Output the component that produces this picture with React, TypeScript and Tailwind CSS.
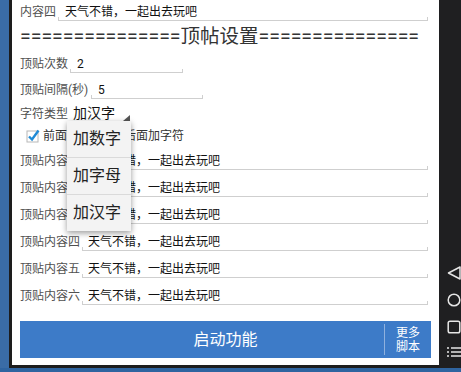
const font = "font-['Roboto','Noto_Sans_CJK_SC',sans-serif]";

function Field({ value, className = '' }: { value: string; className?: string }) {
  return (
    <div className={`relative h-[18px] flex items-center text-[12px] text-[#111] ${className}`}>
      {value}
      <div className="absolute inset-x-0 bottom-0 h-[4px] border-x border-b border-[#cfcfcf]" />
    </div>
  );
}

function Label({ text, w }: { text: string; w: string }) {
  return <div className={`${w} shrink-0 text-[12px] text-[#505050] whitespace-nowrap`}>{text}</div>;
}

function CheckBox() {
  return (
    <svg width="14" height="14" viewBox="0 0 14 14" className="shrink-0">
      <rect x="1" y="2" width="11" height="11" fill="#fff" stroke="#b8b8b8" strokeWidth="1" />
      <path d="M3 7.5 L6 10.5 L12.5 1.5" fill="none" stroke="#1f8ad6" strokeWidth="2.4" />
    </svg>
  );
}

export default function App() {
  const rows = ['顶贴内容一', '顶贴内容二', '顶贴内容三', '顶贴内容四', '顶贴内容五', '顶贴内容六'];
  const text = '天气不错，一起出去玩吧';

  return (
    <div className={`w-[461px] h-[372px] overflow-hidden flex flex-col bg-[#2f64a0] ${font}`}>
      <div className="flex h-[368px]">
        <div className="w-[9px] bg-[#3a6ca6]" />
        <div className="w-[3px] bg-[#1d1d1d]" />

        <div className="w-[427px] bg-white border-b-[3px] border-[#1d1d1d] px-[8px] flex flex-col">
          <div className="h-[24px] flex items-center pr-[3px]">
            <Label text="内容四" w="w-[38px]" />
            <Field value={text} className="flex-1 pl-[7px]" />
          </div>

          <div className="h-[26px] flex items-center text-[19.5px] text-[#333] whitespace-nowrap">
            ===============顶帖设置===============
          </div>

          <div className="h-[27px] flex items-center">
            <Label text="顶贴次数" w="w-[50px]" />
            <Field value="2" className="w-[113px] pl-[7px]" />
          </div>

          <div className="h-[25px] flex items-center">
            <Label text="顶贴间隔(秒)" w="w-[71px]" />
            <Field value="5" className="w-[112px] pl-[7px]" />
          </div>

          <div className="h-[23px] flex items-center">
            <Label text="字符类型" w="w-[53px]" />
            <div className="relative self-stretch w-[58px] flex items-center text-[14px] text-[#111]">
              加汉字
              <svg width="7" height="6" viewBox="0 0 7 6" className="absolute right-[1px] top-[13px]">
                <path d="M7 0 L7 6 L0 6 Z" fill="#555" />
              </svg>
              <div className="absolute z-10 top-[19px] left-[-6px] w-[64px] h-[110px] bg-[#f3f3f3] shadow-[0_2px_6px_rgba(0,0,0,0.4)] flex flex-col text-[16px] text-[#222]">
                {['加数字', '加字母', '加汉字'].map((t, i) => (
                  <div
                    key={t}
                    className={`flex-1 flex items-center pl-[6px] ${i > 0 ? 'border-t border-[#dadada]' : ''}`}
                  >
                    {t}
                  </div>
                ))}
              </div>
            </div>
          </div>

          <div className="h-[22px] flex items-center pl-[6px] text-[12px] text-[#333]">
            <CheckBox />
            <span className="ml-[3px]">前面加字符</span>
            <span className="ml-[4px]"><CheckBox /></span>
            <span className="ml-[3px]">后面加字符</span>
          </div>

          {rows.map((r) => (
            <div key={r} className="h-[27px] flex items-center pr-[3px]">
              <Label text={r} w="w-[62px]" />
              <Field value={text} className="flex-1 pl-[6px]" />
            </div>
          ))}

          <div className="mt-[12px] h-[37px] flex bg-[#3d7bc8] text-white">
            <div className="w-[47px]" />
            <div className="flex-1 flex items-center justify-center text-[16px]">启动功能</div>
            <div className="w-px my-[3px] bg-[#8fb1de]" />
            <div className="w-[46px] flex flex-col items-center justify-center text-[12px] leading-[14px]">
              <span>更多</span>
              <span>脚本</span>
            </div>
          </div>
        </div>

        <div className="w-[22px] bg-[#1f1f21] flex flex-col pl-[8px] pt-[266px] overflow-hidden">
          <svg width="15" height="14" viewBox="0 0 15 14" className="shrink-0">
            <path d="M13 1 L1.5 7 L13 13 Z" fill="none" stroke="#e6e6e6" strokeWidth="1.5" strokeLinejoin="round" />
          </svg>
          <svg width="14" height="14" viewBox="0 0 14 14" className="mt-[13px] shrink-0">
            <circle cx="7" cy="7" r="5.8" fill="none" stroke="#e6e6e6" strokeWidth="1.5" />
          </svg>
          <svg width="14" height="14" viewBox="0 0 14 14" className="mt-[13px] shrink-0">
            <rect x="1.2" y="1.2" width="11.6" height="11.6" rx="1.8" fill="none" stroke="#e6e6e6" strokeWidth="1.5" />
          </svg>
          <svg width="15" height="12" viewBox="0 0 15 12" className="mt-[12px] shrink-0">
            <path d="M0 2 H2 M4 2 H15 M0 6 H2 M4 6 H15 M0 10 H2 M4 10 H15" stroke="#e6e6e6" strokeWidth="1.6" />
          </svg>
        </div>
      </div>
      <div className="flex-1 bg-[#2f64a0]" />
    </div>
  );
}
